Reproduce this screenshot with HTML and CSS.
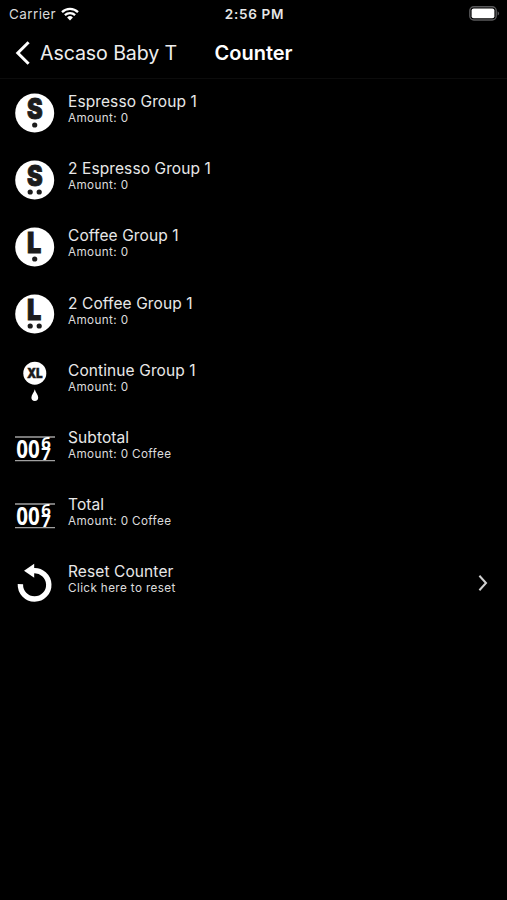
FILE: index.html
```
<!DOCTYPE html>
<html lang="en">
<head>
  <meta charset="UTF-8">
  <meta name="viewport" content="width=device-width, initial-scale=1.0">
  <title>Counter</title>
  <link rel="stylesheet" href="styles.css">
</head>
<body>
<div class="status-bar">
  <div class="carrier">
    <span>Carrier</span>
    <svg class="wifi" width="18" height="14" viewBox="0 0 18 14" fill="none" stroke="#fff" stroke-width="2.3">
      <path d="M1 5.1a11.6 11.6 0 0 1 16 0"/>
      <path d="M3.9 8.2a7.4 7.4 0 0 1 10.2 0"/>
      <path d="M9 13.4L6.1 10.5a4.2 4.2 0 0 1 5.8 0z" fill="#fff" stroke="none"/>
    </svg>
  </div>
  <span class="time">2:56 PM</span>
  <svg class="battery" width="31" height="15" viewBox="0 0 31 15">
    <rect x="0.8" y="0.8" width="26.4" height="13.2" rx="4" fill="none" stroke="#59595b" stroke-width="1.4"/>
    <rect x="2.6" y="2.6" width="22.8" height="9.6" rx="2" fill="#fff"/>
    <path d="M28.6 5.2c2 .8 2 3.6 0 4.4z" fill="#59595b"/>
  </svg>
</div>
<header class="nav-bar">
  <a class="back" href="#">
    <svg width="16" height="24" viewBox="0 0 16 24" fill="none" stroke="#fff" stroke-width="3">
      <path d="M13.6 1.2L2.8 12l10.8 10.8"/>
    </svg>
    <span>Ascaso Baby T</span>
  </a>
  <h1 class="title">Counter</h1>
</header>
<ul class="counter-list">
  <li class="counter-item">
    <svg class="icon" viewBox="0 0 40 40">
      <circle cx="19.7" cy="20" r="19.5" fill="#fff"/>
      <text class="letter" transform="translate(19.9 26.4) scale(.84 1)">S</text>
      <circle cx="19.7" cy="32" r="2.6" fill="#1c1c1c"/>
    </svg>
    <div class="text">
      <span class="name">Espresso Group 1</span>
      <span class="amount">Amount: 0</span>
    </div>
  </li>
  <li class="counter-item">
    <svg class="icon" viewBox="0 0 40 40">
      <circle cx="19.7" cy="20" r="19.5" fill="#fff"/>
      <text class="letter" transform="translate(19.9 26.4) scale(.84 1)">S</text>
      <circle cx="15.2" cy="32" r="2.6" fill="#1c1c1c"/>
      <circle cx="24.2" cy="32" r="2.6" fill="#1c1c1c"/>
    </svg>
    <div class="text">
      <span class="name">2 Espresso Group 1</span>
      <span class="amount">Amount: 0</span>
    </div>
  </li>
  <li class="counter-item">
    <svg class="icon" viewBox="0 0 40 40">
      <circle cx="19.7" cy="20" r="19.5" fill="#fff"/>
      <text class="letter" transform="translate(19.2 26) scale(.9 1)">L</text>
      <circle cx="19.7" cy="32" r="2.6" fill="#1c1c1c"/>
    </svg>
    <div class="text">
      <span class="name">Coffee Group 1</span>
      <span class="amount">Amount: 0</span>
    </div>
  </li>
  <li class="counter-item">
    <svg class="icon" viewBox="0 0 40 40">
      <circle cx="19.7" cy="20" r="19.5" fill="#fff"/>
      <text class="letter" transform="translate(19.2 26) scale(.9 1)">L</text>
      <circle cx="15.2" cy="32" r="2.6" fill="#1c1c1c"/>
      <circle cx="24.2" cy="32" r="2.6" fill="#1c1c1c"/>
    </svg>
    <div class="text">
      <span class="name">2 Coffee Group 1</span>
      <span class="amount">Amount: 0</span>
    </div>
  </li>
  <li class="counter-item">
    <svg class="icon" viewBox="0 0 40 40">
      <circle cx="19.8" cy="12.2" r="11.5" fill="#fff"/>
      <text class="letter letter-small" transform="translate(19.8 16.8) scale(.9 1)">XL</text>
      <path d="M19.8 28.2c.6 3.2 3.4 5.4 3.4 8.3a3.4 3.4 0 0 1-6.8 0c0-2.9 2.8-5.1 3.4-8.3z" fill="#fff"/>
    </svg>
    <div class="text">
      <span class="name">Continue Group 1</span>
      <span class="amount">Amount: 0</span>
    </div>
  </li>
  <li class="counter-item">
    <svg class="icon" viewBox="0 0 40 40">
      <path d="M0 8h40M0 31.6h40" stroke="#a0a0a0" stroke-width="1.3"/>
      <text class="digit" transform="translate(1.2 28.8) scale(.84 1)">00</text>
      <text class="digit digit-roll" transform="translate(26.3 19.6) scale(1.08 1)">6</text>
      <text class="digit digit-roll" transform="translate(26.3 31.4) scale(1.08 1)">7</text>
    </svg>
    <div class="text">
      <span class="name">Subtotal</span>
      <span class="amount">Amount: 0 Coffee</span>
    </div>
  </li>
  <li class="counter-item">
    <svg class="icon" viewBox="0 0 40 40">
      <path d="M0 8h40M0 31.6h40" stroke="#a0a0a0" stroke-width="1.3"/>
      <text class="digit" transform="translate(1.2 28.8) scale(.84 1)">00</text>
      <text class="digit digit-roll" transform="translate(26.3 19.6) scale(1.08 1)">6</text>
      <text class="digit digit-roll" transform="translate(26.3 31.4) scale(1.08 1)">7</text>
    </svg>
    <div class="text">
      <span class="name">Total</span>
      <span class="amount">Amount: 0 Coffee</span>
    </div>
  </li>
  <li class="counter-item">
    <svg class="icon" viewBox="0 0 40 40">
      <path d="M5.4 21.2A14.2 14.2 0 1 0 18.4 7.7" fill="none" stroke="#fff" stroke-width="5.4"/>
      <path d="M9 7.8L19.2.8v14z" fill="#fff"/>
    </svg>
    <div class="text">
      <span class="name">Reset Counter</span>
      <span class="amount">Click here to reset</span>
    </div>
    <svg class="chevron" width="10" height="18" viewBox="0 0 10 18" fill="none" stroke="#d0d0d0" stroke-width="2">
      <path d="M1.4 1.8L8 9l-6.6 7.2"/>
    </svg>
  </li>
</ul>
</body>
</html>
```
FILE: styles.css
```
body {
  margin: 0;
  min-height: 100vh;
  background-color: #000;
  color: #fff;
  font-family: Inter, "Liberation Sans", sans-serif;
}

/* Status bar */
.status-bar {
  display: grid;
  grid-template-columns: 1fr auto 1fr;
  align-items: center;
  height: 27px;
  padding: 0 7px 0 9px;
  font-size: 13.5px;
}

.carrier {
  display: flex;
  align-items: center;
  gap: 5px;
  color: #d8d8d8;
  letter-spacing: 0.4px;
}

.time {
  font-weight: 600;
  color: #e6e6e6;
  letter-spacing: 0.7px;
}

.battery {
  justify-self: end;
}

/* Navigation bar */
.nav-bar {
  display: grid;
  grid-template-columns: 1fr auto 1fr;
  align-items: center;
  height: 51px;
  padding: 0 15px;
  border-bottom: 1px solid #0c0c0c;
}

.back {
  display: flex;
  align-items: center;
  gap: 9px;
  color: #eee;
  font-size: 19.6px;
  letter-spacing: -0.1px;
  text-decoration: none;
  white-space: nowrap;
}

.title {
  margin: 0;
  font-size: 20px;
  font-weight: 600;
}

/* Counter list */
.counter-list {
  list-style-type: none;
  margin: 0;
  padding: 0;
}

.counter-item {
  display: flex;
  align-items: center;
  height: 67.2px;
  padding: 0 19px 0 15px;
}

.icon {
  width: 40px;
  height: 40px;
  margin-right: 13px;
}

.text {
  display: flex;
  flex: 1;
  flex-direction: column;
  margin-bottom: 7px;
}

.name {
  font-size: 15.5px;
  line-height: 19px;
  color: #e8e8e8;
  letter-spacing: 0.1px;
}

.amount {
  font-size: 11.7px;
  line-height: 15px;
  color: #dcdcdc;
  letter-spacing: 0.38px;
}

/* Letters and digits inside the icons */
.letter {
  font-family: Inter, sans-serif;
  font-size: 28px;
  font-weight: 900;
  fill: #1c1c1c;
  stroke: #1c1c1c;
  stroke-width: 0.9px;
  text-anchor: middle;
}

.letter-small {
  font-size: 13px;
  stroke-width: 0.4px;
}

.digit {
  font-family: "Open Sans", sans-serif;
  font-size: 24.5px;
  font-weight: 700;
  fill: #fff;
}

.digit-roll {
  font-size: 15.5px;
}
```
